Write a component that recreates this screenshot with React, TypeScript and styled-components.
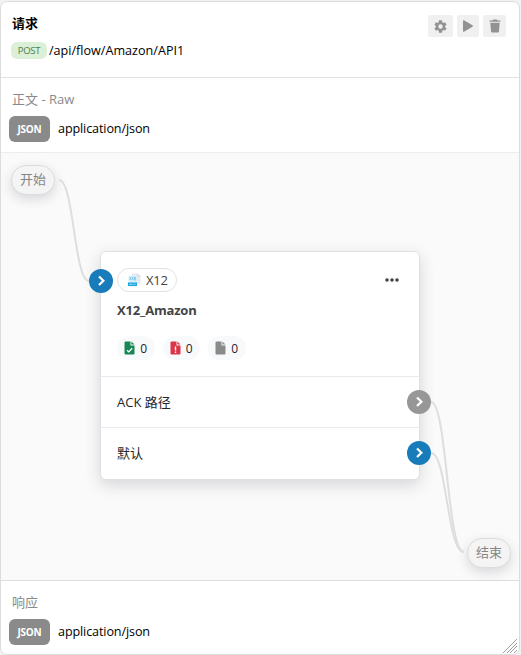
import React from "react";
import styled, { createGlobalStyle } from "styled-components";

const GlobalStyle = createGlobalStyle`
  * { box-sizing: border-box; }
  body {
    margin: 0;
    background: #f2f2f2;
    font-family: "Open Sans", "Noto Sans CJK SC", sans-serif;
    font-size: 13px;
    color: #000;
  }
`;

const Panel = styled.main`
  position: relative;
  display: flex;
  flex-direction: column;
  width: 520px;
  height: 654px;
  margin-top: 1px;
  background: #fff;
  border: 1px solid #dcdcdc;
  border-radius: 7px;
  overflow: hidden;
`;

const Header = styled.header`
  display: flex;
  justify-content: space-between;
  flex: 0 0 76px;
  padding: 11px 13px 0 10px;
  border-bottom: 1px solid #e2e2e2;
`;

const Title = styled.h1`
  margin: 0 0 0 1px;
  font-size: 13px;
  line-height: 20px;
  font-weight: 700;
`;

const Endpoint = styled.div`
  display: flex;
  align-items: center;
  gap: 2px;
  margin-top: 8px;
  height: 18px;
`;

const Method = styled.span`
  width: 36px;
  height: 17px;
  border-radius: 6px;
  background: #dcf0d8;
  color: #4b804d;
  font-size: 9.5px;
  line-height: 17px;
  text-align: center;
  letter-spacing: -0.2px;
`;

const Text = styled.span<{ $track?: number }>`
  font-size: 12.6px;
  line-height: 18px;
  white-space: nowrap;
  letter-spacing: ${(p) => p.$track ?? 0}px;
`;

const Path0 = styled(Text)`
  padding-top: 2px;
`;

const Toolbar = styled.div`
  display: flex;
  gap: 4px;
  padding-top: 2px;
`;

const ToolButton = styled.button<{ $width: number }>`
  display: flex;
  align-items: center;
  justify-content: center;
  width: ${(p) => p.$width}px;
  height: 22px;
  padding: 0;
  border: 0;
  border-radius: 2px;
  background: #f0f0f0;
  color: #929292;
`;

const Section = styled.section<{ $height: number; $line?: boolean }>`
  flex: 0 0 ${(p) => p.$height}px;
  padding: 11px 8px 0;
  border-bottom: ${(p) => (p.$line ? "1px solid #ededed" : "0")};
`;

const SectionTitle = styled.div`
  padding-left: 3px;
  height: 20px;
  line-height: 20px;
  font-size: 13px;
  color: #8a8a8a;
`;

const ContentType = styled.div`
  display: flex;
  align-items: center;
  gap: 8px;
  margin-top: 7px;
  height: 26px;
`;

const Format = styled.span`
  width: 41px;
  height: 26px;
  border-radius: 6px;
  background: #8a8a8a;
  color: #fff;
  font-size: 10px;
  font-weight: 700;
  line-height: 27px;
  text-align: center;
  letter-spacing: -0.2px;
`;

const Canvas = styled.div`
  position: relative;
  flex: 1;
  background: #fafafa;
  border-bottom: 1px solid #dedede;
`;

const Wires = styled.svg`
  position: absolute;
  inset: 0;
  width: 100%;
  height: 100%;
  fill: none;
  stroke: #dedede;
  stroke-width: 2;
`;

const Terminal = styled.div<{ $x: number; $y: number }>`
  position: absolute;
  left: ${(p) => p.$x}px;
  top: ${(p) => p.$y}px;
  width: 44px;
  height: 30px;
  border: 1px solid #dcdcdc;
  border-radius: 15px;
  background: #f4f4f4;
  box-shadow: 0 4px 12px rgba(40, 40, 70, 0.16);
  color: #858585;
  font-size: 13px;
  line-height: 27px;
  text-align: center;
`;

const Card = styled.article`
  position: absolute;
  left: 99px;
  top: 98px;
  width: 320px;
  height: 229px;
  border: 1px solid #dee0e4;
  border-radius: 6px;
  background: #fff;
  box-shadow: 0 5px 16px rgba(33, 37, 60, 0.17);
`;

const CardHead = styled.div`
  height: 124px;
  padding: 16px 20px 0 16px;
`;

const CardBar = styled.div`
  display: flex;
  align-items: center;
  justify-content: space-between;
  height: 24px;
`;

const TypeChip = styled.div`
  display: flex;
  align-items: center;
  width: 60px;
  height: 24px;
  padding-left: 9px;
  gap: 5px;
  border: 1px solid #e0e3e6;
  border-radius: 12px;
  color: #444;
  font-size: 13px;
  line-height: 20px;
  letter-spacing: -0.2px;
`;

const CardName = styled.h2`
  margin: 8px 0 0;
  height: 20px;
  color: #444;
  font-size: 13px;
  font-weight: 700;
  line-height: 20px;
  letter-spacing: -0.18px;
`;

const Counts = styled.div`
  display: flex;
  gap: 8px;
  margin-top: 16px;
`;

const Count = styled.span`
  display: flex;
  align-items: center;
  justify-content: center;
  gap: 5px;
  width: 37.5px;
  height: 24px;
  border-radius: 12px;
  background: #f8f9fb;
  color: #212529;
  font-size: 12px;
`;

const Path = styled.div<{ $height: number }>`
  height: ${(p) => p.$height}px;
  padding-left: 16px;
  border-top: 1px solid #eaeaea;
  color: #262626;
  font-size: 13px;
  line-height: 50px;
`;

const Port = styled.span<{ $x: number; $y: number; $muted?: boolean }>`
  position: absolute;
  left: ${(p) => p.$x}px;
  top: ${(p) => p.$y}px;
  display: flex;
  align-items: center;
  justify-content: center;
  width: 24px;
  height: 24px;
  border-radius: 50%;
  background: ${(p) => (p.$muted ? "#979797" : "#197cba")};
`;

const Grip = styled.svg`
  position: absolute;
  right: 2px;
  bottom: 1px;
`;

const GearIcon = () => (
  <svg width="15" height="15" viewBox="0 0 24 24" fill="currentColor">
    <path d="M19.4 13c.1-.3.1-.7.1-1s0-.7-.1-1l2.3-1.8-2.3-4-2.8 1.1a8 8 0 0 0-1.7-1L14.500 2h-5l-.4 3.300a8 8 0 0 0-1.700 1L4.600 5.200l-2.300 4L4.600 11a8 8 0 0 0 0 2l-2.300 1.800 2.300 4 2.800-1.100a8 8 0 0 0 1.700 1l.4 3.300h5l.4-3.300a8 8 0 0 0 1.700-1l2.800 1.100 2.300-4zM12 15.500a3.500 3.500 0 1 1 0-7 3.500 3.500 0 0 1 0 7z" />
  </svg>
);

const PlayIcon = () => (
  <svg width="12" height="14" viewBox="0 0 12 14" fill="currentColor">
    <path d="M1 1.800q0-1 1-.5l8.500 5q1 .7 0 1.400l-8.500 5q-1 .5-1-.5z" />
  </svg>
);

const TrashIcon = () => (
  <svg width="12" height="14" viewBox="0 0 12 14" fill="currentColor">
    <path d="M.5 1.500h3L4.300.5h3.400l.8 1h3v1.300H.5zM1.300 3.800h9.400l-.7 8.700q-.1 1-1.100 1H3.100q-1 0-1.100-1z" />
  </svg>
);

const DocIcon = ({ color, mark }: { color: string; mark?: "check" | "alert" }) => (
  <svg width="11" height="14" viewBox="0 0 11 14">
    <path d="M1.500.500H6.500V4.500H10.500V12.500q0 1-1 1h-8q-1 0-1-1v-11q0-1 1-1zM7.400.500L10.500 3.600H7.400z" fill={color} />
    {mark === "check" && <path d="M3 9.200l1.800 1.700L8.200 7.300" fill="none" stroke="#fff" strokeWidth="1.300" />}
    {mark === "alert" && <path d="M5.500 5.500v4M5.500 10.500v1.500" stroke="#fff" strokeWidth="1.400" />}
  </svg>
);

const X12Icon = () => (
  <svg width="14" height="14" viewBox="0 0 14 14">
    <path d="M5 .5h5.500l3 3V11H5z" fill="#e6e9f1" />
    <path d="M10.500.5v3h3z" fill="#d0d5e1" />
    <path d="M1.500 2.500h7L9.500 4v9.500h-8z" fill="#d5effa" />
    <path d="M2.500 4.200l2 2.600M4.500 4.200l-2 2.600M5.800 4.200v2.700M7 4.500h1.600v1.200H7.200v1.200h1.600" fill="none" stroke="#50b7df" strokeWidth=".7" />
    <path d="M1 9.500h9V13H1z" fill="#21a7dc" />
    <path d="M2.500 11.300h2M5.500 11.300h1M7.500 11.300h1" stroke="#c5eafa" strokeWidth="1" />
  </svg>
);

const MoreIcon = () => (
  <svg width="14" height="4" viewBox="0 0 14 4" fill="#444">
    <circle cx="2" cy="2" r="1.800" />
    <circle cx="7" cy="2" r="1.800" />
    <circle cx="12" cy="2" r="1.800" />
  </svg>
);

const Chevron = () => (
  <svg width="12" height="12" viewBox="0 0 12 12" fill="none" stroke="#fff" strokeWidth="2.200">
    <path d="M4 1.500L8.400 5.700L4 10" />
  </svg>
);

const JsonType = () => (
  <ContentType>
    <Format>JSON</Format>
    <Text $track={-0.12}>application/json</Text>
  </ContentType>
);

export default function App() {
  return (
    <>
      <GlobalStyle />
      <Panel>
        <Header>
          <div>
            <Title>请求</Title>
            <Endpoint>
              <Method>POST</Method>
              <Path0 $track={0}>/api/flow/Amazon/API1</Path0>
            </Endpoint>
          </div>
          <Toolbar>
            <ToolButton $width={25} aria-label="settings"><GearIcon /></ToolButton>
            <ToolButton $width={22} aria-label="run"><PlayIcon /></ToolButton>
            <ToolButton $width={23} aria-label="delete"><TrashIcon /></ToolButton>
          </Toolbar>
        </Header>
        <Section $height={75} $line>
          <SectionTitle>正文 - Raw</SectionTitle>
          <JsonType />
        </Section>
        <Canvas>
          <Terminal $x={10} $y={12}>开始</Terminal>
          <Terminal $x={466} $y={385}>结束</Terminal>
          <Card>
            <CardHead>
              <CardBar>
                <TypeChip><X12Icon />X12</TypeChip>
                <MoreIcon />
              </CardBar>
              <CardName>X12_Amazon</CardName>
              <Counts>
                <Count><DocIcon color="#198754" mark="check" />0</Count>
                <Count><DocIcon color="#dc3548" mark="alert" />0</Count>
                <Count><DocIcon color="#8a8a8a" />0</Count>
              </Counts>
            </CardHead>
            <Path $height={51}>ACK 路径</Path>
            <Path $height={52}>默认</Path>
          </Card>
          <Wires>
            <path d="M58 27C73 27 73 128 88 128" />
            <path d="M430 249C446 249 446 399 463 399" />
            <path d="M430 300C446 300 446 399 463 399" />
          </Wires>
          <Port $x={88} $y={116}><Chevron /></Port>
          <Port $x={406} $y={237} $muted><Chevron /></Port>
          <Port $x={406} $y={288}><Chevron /></Port>
        </Canvas>
        <Section $height={73}>
          <SectionTitle>响应</SectionTitle>
          <JsonType />
        </Section>
        <Grip width="14" height="14" viewBox="0 0 14 14" stroke="#a0a0a0" strokeWidth="1">
          <path d="M0 14L14 0M4 14L14 4M7 14L14 7M11 14L14 11" />
        </Grip>
      </Panel>
    </>
  );
}
